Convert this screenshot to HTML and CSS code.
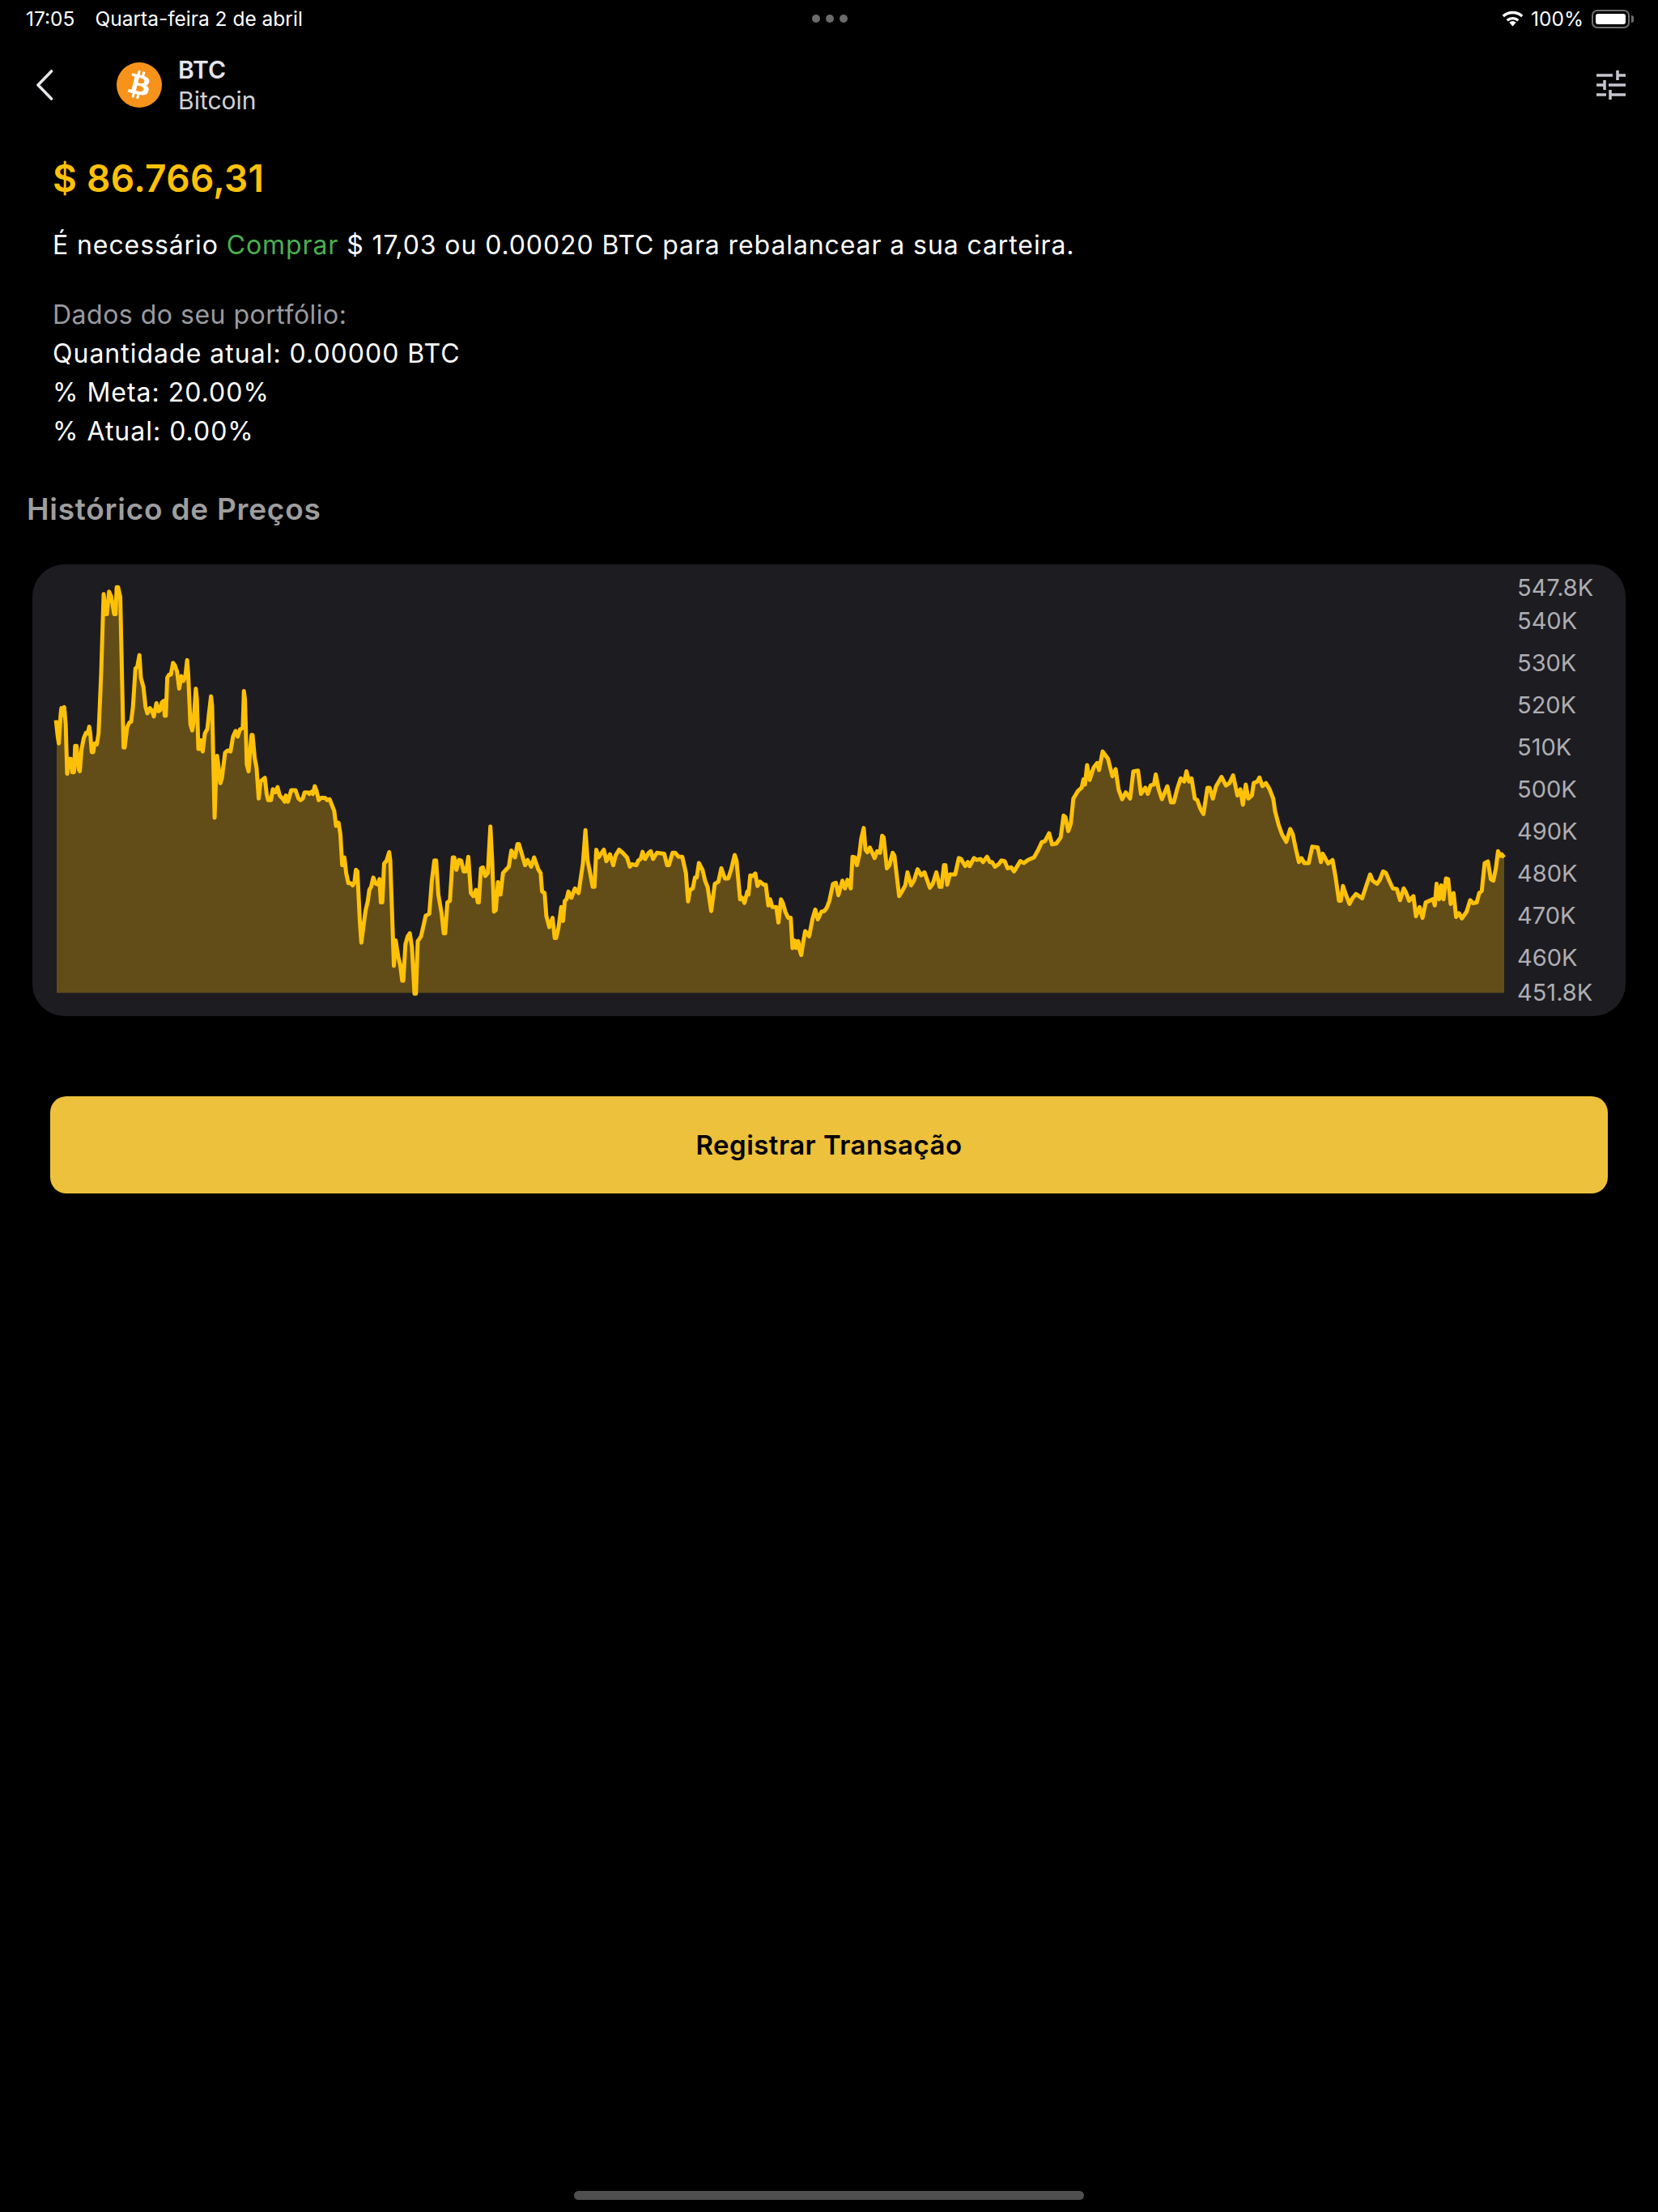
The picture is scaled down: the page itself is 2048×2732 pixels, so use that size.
FILE: index.html
```html
<!DOCTYPE html>
<html lang="pt-BR">
<head>
    <meta charset="UTF-8">
    <meta name="viewport" content="width=device-width, initial-scale=1.0">
    <title>BTC - Bitcoin</title>
    <link rel="stylesheet" href="styles.css">
</head>
<body>
    <div class="screen">
        <div class="statusbar">
            <div class="status-left">
                <span>17:05</span>
                <span>Quarta-feira 2 de abril</span>
            </div>
            <div class="status-dots"><i></i><i></i><i></i></div>
            <div class="status-right">
                <svg class="wifi" viewBox="0 0 27 20" width="27" height="20">
                    <path d="M13.5 19.5l-4.2-4.700a6 6 0 0 1 8.400 0z" fill="#fff"/>
                    <path d="M6.700 12.300a10 10 0 0 1 13.600 0" fill="none" stroke="#fff" stroke-width="3.400"/>
                    <path d="M1.800 7a17.300 17.300 0 0 1 23.400 0" fill="none" stroke="#fff" stroke-width="3.400"/>
                </svg>
                <span>100%</span>
                <div class="battery"><div class="battery-level"></div></div>
                <div class="battery-nub"></div>
            </div>
        </div>

        <div class="header">
            <svg class="back" viewBox="0 0 22 38" width="22" height="38">
                <path d="M19.5 2L3 19l16.500 17" fill="none" stroke="#e5e5ea" stroke-width="3.600" stroke-linecap="round" stroke-linejoin="round"/>
            </svg>
            <svg class="coin" viewBox="0 0 24 24" width="56" height="56">
                <circle cx="12" cy="12" r="12" fill="#f7931a"/>
                <path fill="#fff" d="M17.288 10.29c.24-1.59-.974-2.45-2.64-3.03l.54-2.153-1.315-.33-.525 2.107c-.345-.087-.705-.167-1.064-.25l.526-2.127-1.32-.33-.54 2.165c-.285-.067-.565-.132-.84-.2l-1.815-.45-.35 1.407s.975.225.955.236c.535.136.63.486.615.766l-1.477 5.92c-.075.166-.24.406-.614.314.015.02-.96-.24-.96-.24l-.66 1.51 1.71.426.93.242-.54 2.19 1.32.327.54-2.17c.36.1.705.19 1.05.273l-.51 2.154 1.32.33.545-2.19c2.24.427 3.93.257 4.64-1.774.57-1.637-.03-2.58-1.217-3.196.854-.193 1.5-.76 1.68-1.93h.01zm-3.01 4.22c-.404 1.64-3.157.75-4.05.53l.72-2.9c.896.23 3.757.67 3.33 2.37zm.41-4.24c-.37 1.49-2.662.735-3.405.55l.654-2.64c.744.18 3.137.524 2.75 2.084v.006z"/>
            </svg>
            <div class="coin-names">
                <div class="coin-symbol">BTC</div>
                <div class="coin-name">Bitcoin</div>
            </div>
            <svg class="tune" viewBox="0 0 36 36" width="36" height="36">
                <path d="M0 6h20M26 0v12M26 6h10M0 18h10M10 12v12M15 18h21M0 30h12M17 24v12M17 30h19" fill="none" stroke="#c9c5d0" stroke-width="3.500"/>
            </svg>
        </div>

        <div class="summary">
            <div class="price">$ 86.766,31</div>
            <p class="advice">É necessário <span class="buy">Comprar</span> $ 17,03 ou 0.00020 BTC para rebalancear a sua carteira.</p>
            <div class="portfolio">
                <div class="portfolio-title">Dados do seu portfólio:</div>
                <div>Quantidade atual: 0.00000 BTC</div>
                <div>% Meta: 20.00%</div>
                <div>% Atual: 0.00%</div>
            </div>
        </div>

        <h2 class="section-title">Histórico de Preços</h2>

        <div class="chart-card">
            <svg class="chart" viewBox="157 78 4005 1385" preserveAspectRatio="none">
                <polygon id="chart-area" class="chart-area"></polygon>
                <polyline id="chart-line" class="chart-line"></polyline>
            </svg>
            <div class="axis">
                <span class="tick tick-near">547.8K</span>
                <span class="tick">540K</span>
                <span class="tick">530K</span>
                <span class="tick">520K</span>
                <span class="tick">510K</span>
                <span class="tick">500K</span>
                <span class="tick">490K</span>
                <span class="tick">480K</span>
                <span class="tick">470K</span>
                <span class="tick tick-near-end">460K</span>
                <span class="tick">451.8K</span>
            </div>
        </div>

        <button class="register">Registrar Transação</button>

        <div class="home-bar"></div>
    </div>
    <script src="chart.js"></script>
</body>
</html>
```
FILE: styles.css
```css
* {
    box-sizing: border-box;
}
body {
    margin: 0;
    background-color: #000;
    color: #fff;
    font-family: Inter, "Noto Sans", sans-serif;
}
.screen {
    height: 2732px;
    display: flex;
    flex-direction: column;
}
.statusbar {
    height: 46px;
    padding: 0 30px 0 32px;
    display: grid;
    grid-template-columns: 1fr auto 1fr;
    align-items: center;
    font-size: 24.5px;
}
.status-left {
    display: flex;
    gap: 25px;
}
.status-dots {
    display: flex;
    gap: 7px;
}
.status-dots i {
    width: 10px;
    height: 10px;
    border-radius: 50%;
    background-color: #6b6b6b;
}
.status-right {
    display: flex;
    align-items: center;
    justify-content: flex-end;
}
.status-right span {
    margin-left: 9px;
}
.battery {
    width: 47px;
    height: 23px;
    margin-left: 10px;
    padding: 3px;
    border: 2px solid #6f6f6f;
    border-radius: 7px;
}
.battery-level {
    height: 100%;
    background-color: #fff;
    border-radius: 3px;
}
.battery-nub {
    width: 3px;
    height: 9px;
    margin-left: 2px;
    background-color: #6f6f6f;
    border-radius: 0 3px 3px 0;
}
.header {
    height: 78px;
    margin-top: 20px;
    padding: 0 40px 0 44px;
    display: flex;
    align-items: center;
}
.coin {
    margin-left: 78px;
}
.coin-names {
    margin-left: 20px;
    flex: 1;
}
.coin-symbol {
    font-size: 30px;
    line-height: 38px;
    font-weight: 600;
    color: #e5e5ea;
}
.coin-name {
    font-size: 30px;
    line-height: 38px;
    color: #d1d1d6;
}
.summary {
    padding-left: 65px;
    font-size: 32px;
    letter-spacing: 1px;
}
.price {
    margin-top: 48px;
    font-size: 46px;
    line-height: 56px;
    font-weight: 600;
    letter-spacing: 0.3px;
    color: #ffc107;
}
.advice {
    margin: 31px 0 0;
    line-height: 48px;
    letter-spacing: 0.9px;
}
.buy {
    color: #4caf50;
}
.portfolio {
    margin-top: 38px;
    line-height: 48px;
}
.portfolio-title {
    color: #9a9a9f;
    letter-spacing: 0.5px;
}
.section-title {
    margin: 50px 0 0 33px;
    font-size: 37px;
    line-height: 44px;
    font-weight: 600;
    letter-spacing: 0.75px;
    color: #9e9e9e;
}
.chart-card {
    width: 1968px;
    height: 558px;
    margin: 46px 0 0 40px;
    padding: 13px 0 0 30px;
    display: flex;
    align-items: flex-start;
    background-color: #1d1c21;
    border-radius: 40px;
}
.chart {
    width: 1788px;
    height: 530px;
    flex: none;
    overflow: visible;
}
.chart-area {
    fill: #624d18;
}
.chart-line {
    fill: none;
    stroke: #ffc107;
    stroke-width: 5px;
    stroke-linejoin: round;
    vector-effect: non-scaling-stroke;
}
.axis {
    margin-left: 16px;
    padding-top: 1px;
    display: flex;
    flex-direction: column;
    gap: 22px;
    font-size: 29px;
    color: #aeaeb2;
}
.tick {
    line-height: 30px;
}
.tick-near {
    margin-bottom: -11px;
}
.tick-near-end {
    margin-bottom: -9px;
}
.register {
    width: 1924px;
    height: 120px;
    margin: 99px 0 0 62px;
    border: none;
    border-radius: 20px;
    background-color: #edc13b;
    color: #000;
    font-family: inherit;
    font-size: 33px;
    font-weight: 600;
    letter-spacing: 0.45px;
}
.home-bar {
    width: 630px;
    height: 11px;
    margin: auto 0 15px 709px;
    background-color: #4f4f4f;
    border-radius: 6px;
}
```
FILE: chart.js
```javascript
// price history, traced in chart units
const baseline = 1427;
const left = 157;
const right = 4162;

const segments = [
    { dx: 0, points: [
        155,547, 160,600, 163,622, 168,530, 170,508, 174,530, 178,505, 182,560, 186,720, 190,672, 196,672, 200,715, 205,715, 208,630, 212,630, 218,705, 221,712, 226,640, 232,605, 238,588, 243,590, 247,568, 250,590, 254,650, 258,650, 262,622, 268,625, 273,590, 280,400, 287,140, 292,205, 296,205, 302,132, 308,148, 316,205, 320,205, 323,118, 327,118, 333,150, 342,635, 345,635, 352,570, 358,555, 363,552, 368,505, 375,380, 380,375, 386,337, 390,410, 397,440, 403,505, 408,525, 415,508, 420,515, 426,535, 433,492, 439,518, 443,515, 448,490, 453,485, 456,533, 459,533, 463,410, 468,400, 473,400, 479,362, 484,370, 490,390, 496,445, 502,405, 508,420, 513,405, 518,353, 521,400, 527,560, 532,580, 536,550, 542,445, 545,480, 549,640, 553,640, 556,612, 561,648, 567,590, 574,575, 578,530, 584,470, 587,500, 594,862, 597,760, 601,662, 605,700, 610,750, 614,735, 623,652, 630,645, 638,648, 645,600, 652,582, 658,600, 664,577, 672,572, 675,453, 678,480, 683,690, 688,712, 696,595, 699,595, 705,670, 710,700, 716,800, 721,745, 733,733, 738,785, 742,805, 750,805, 755,770, 762,780, 768,763, 774,790, 782,800, 788,810, 791,790, 797,810, 806,773, 818,773, 826,800, 832,805, 838,800, 843,780, 852,780, 856,785, 862,778, 866,785, 871,760, 876,775, 882,805, 890,797, 900,798, 905,805, 912,802, 920,825, 925,840, 930,888, 937,878, 942,915, 947,1015, 953,990, 958,1040, 964,1073, 970,1073, 976,1080, 981,1070, 985,1030, 989,1035, 996,1200, 1000,1265, 1006,1210, 1012,1160, 1018,1130, 1022,1095, 1027,1085, 1033,1055, 1040,1075, 1047,1078, 1050,1060, 1054,1135, 1058,1135, 1063,1010, 1070,1000, 1077,973, 1080,1000, 1090,1340, 1095,1258, 1102,1310, 1108,1340, 1113,1388, 1116,1388, 1122,1270, 1128,1245, 1134,1235, 1140,1280, 1147,1430, 1151,1430, 1156,1260, 1165,1245, 1172,1210, 1178,1178, 1188,1172, 1195,1065, 1202,1000, 1207,1000, 1213,1110, 1222,1170, 1228,1235, 1232,1235, 1238,1135, 1245,1130, 1253,990, 1257,990, 1263,1030, 1270,998, 1276,1000, 1283,1035, 1290,1035, 1296,988, 1303,1105, 1310,1115, 1317,1095, 1322,1135, 1325,1135, 1331,1025, 1336,1022, 1343,1050, 1350,1040, 1357,890, 1362,1000, 1367,1165, 1372,1160, 1378,1070, 1385,1110, 1392,1040, 1400,1030, 1408,1020, 1415,968, 1425,990, 1432,947, 1436,947, 1453,1015, 1460,998, 1470,1020, 1478,990, 1490,1030, 1496,1040, 1500,1100, 1507,1105, 1512,1180, 1520,1215
    ] },
    { dx: 1523, points: [
        6,1185, 12,1250, 16,1250, 22,1220, 30,1150, 35,1195, 40,1130, 45,1125, 50,1100, 58,1120, 68,1090, 78,1105, 90,1010, 97,902, 103,1000, 110,1040, 117,1085, 122,1085, 127,965, 133,990, 148,965, 155,1002, 165,980, 174,1015, 180,985, 190,965, 200,975, 212,990, 220,1020, 225,1012, 238,1015, 243,1000, 250,995, 255,972, 262,995, 272,975, 278,970, 284,995, 295,975, 315,978, 323,1015, 328,1015, 338,975, 345,975, 355,988, 365,988, 375,1040, 381,1132, 386,1095, 394,1090, 400,1055, 405,1055, 411,1008, 421,1030, 428,1065, 435,1085, 445,1163, 455,1075, 465,1068, 473,1025, 483,1058, 492,1058, 500,1030, 510,982, 515,1000, 525,1125, 530,1120, 537,1137, 545,1100, 548,1110, 553,1048, 560,1050, 567,1042, 573,1082, 580,1068, 590,1078, 596,1078, 603,1145, 608,1125, 614,1150, 625,1150, 631,1200, 638,1125, 644,1140, 650,1165, 658,1185, 665,1185, 670,1283, 676,1258, 680,1282, 686,1260, 690,1290, 694,1305, 700,1260, 705,1228, 716,1245, 725,1190, 733,1158, 740,1190, 750,1165, 758,1163, 765,1152, 772,1130, 782,1075, 790,1072, 797,1112, 808,1065, 815,1090, 822,1062, 831,1090, 836,988, 842,990, 848,1015, 855,980, 860,930, 867,895, 872,965, 877,973, 884,958, 897,992, 904,970, 912,975, 918,920, 922,925, 931,1025, 938,1015, 947,975, 952,985, 965,1115, 975,1095, 982,1080, 988,1038, 998,1080, 1006,1065, 1016,1028, 1026,1048, 1035,1038, 1050,1088, 1058,1075, 1068,1038, 1077,1085, 1082,1085, 1089,1015, 1093,1015, 1098,1078, 1105,1045, 1120,1045, 1130,992, 1136,995, 1148,1018, 1155,1005, 1160,1018, 1172,992, 1180,998, 1190,995, 1197,1005, 1208,988, 1216,1005, 1222,1005, 1230,1020, 1240,1012, 1248,1000, 1257,1002, 1265,1025, 1275,1022, 1283,1035, 1300,1002, 1310,1008, 1322,998, 1338,990, 1350,965, 1360,940, 1368,938, 1380,912, 1388,948, 1400,945, 1412,925, 1420,855, 1425,860, 1433,905, 1440,880, 1447,800, 1460,775, 1470,765, 1475,738, 1479,755, 1485,692, 1492,740, 1503,700, 1513,685, 1518,708
    ] },
    { dx: 3046, points: [
        5,648, 20,672, 32,728, 41,705, 49,770, 59,802, 69,780, 81,800, 90,712, 103,710, 111,785, 123,765, 130,785, 138,757, 147,755, 152,722, 160,770, 169,802, 184,760, 194,812, 202,812, 211,770, 221,735, 231,745, 237,712, 244,745, 251,735, 260,800, 267,805, 275,832, 284,850, 295,765, 301,765, 310,800, 319,760, 334,730, 346,758, 356,750, 366,725, 378,790, 386,770, 393,820, 401,755, 408,800, 418,790, 423,750, 433,745, 439,732, 447,760, 457,750, 467,770, 477,800, 482,840, 492,885, 501,915, 513,940, 524,898, 531,915, 539,960, 548,1005, 555,992, 563,1008, 575,1008, 585,955, 600,958, 609,1005, 614,978, 629,1010, 641,998, 649,1050, 659,1130, 664,1130, 670,1082, 678,1110, 688,1140, 696,1122, 706,1108, 723,1122, 732,1090, 745,1045, 752,1065, 764,1075, 772,1062, 781,1035, 789,1040, 798,1065, 808,1090, 819,1092, 828,1128, 838,1090, 845,1105, 853,1130, 865,1115, 872,1180, 882,1150, 890,1185, 899,1135, 919,1125, 924,1145, 929,1075, 936,1125, 942,1080, 948,1125, 955,1058, 961,1060, 968,1140, 976,1105, 983,1182, 991,1170, 999,1187, 1012,1165, 1022,1128, 1030,1138, 1040,1135, 1047,1105, 1054,1098, 1062,1008, 1071,1003, 1079,1060, 1086,1065, 1093,1025, 1099,970, 1106,985, 1109,980, 1116,990
    ] }
];

const coords = [];
segments.forEach(function (segment) {
    for (let i = 0; i < segment.points.length; i += 2) {
        coords.push((segment.points[i] + segment.dx) + ',' + segment.points[i + 1]);
    }
});

const line = coords.join(' ');
document.getElementById('chart-line').setAttribute('points', line);
document.getElementById('chart-area').setAttribute('points',
    left + ',' + baseline + ' ' + left + ',547 ' + line + ' ' + right + ',990 ' + right + ',' + baseline);
```
